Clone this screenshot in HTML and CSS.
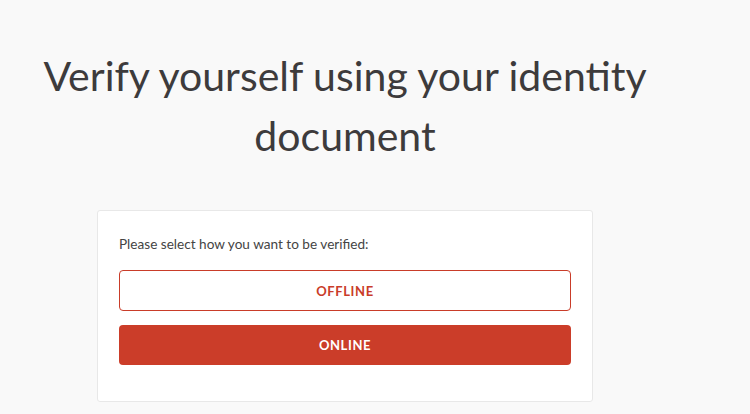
FILE: index.html
```html
<!DOCTYPE html>
<html lang="en">
<head>
<meta charset="utf-8">
<title>Verify yourself</title>
<link rel="stylesheet" href="styles.css">
</head>
<body>
<main class="page">
  <h1 class="title">Verify yourself using your identity document</h1>
  <section class="card">
    <p class="prompt">Please select how you want to be verified:</p>
    <button class="btn btn-outline" type="button">OFFLINE</button>
    <button class="btn btn-solid" type="button">ONLINE</button>
  </section>
</main>
</body>
</html>
```

FILE: styles.css
```css
html, body {
  margin: 0;
  padding: 0;
  background: #f9f9f9;
}
body {
  font-family: "Lato", "Liberation Sans", sans-serif;
  color: #3c3c3c;
}
.page {
  width: 690px;
  display: flex;
  flex-direction: column;
  align-items: center;
  padding-top: 46px;
}
.title {
  margin: 0;
  width: 660px;
  font-size: 41px;
  line-height: 60px;
  font-weight: 400;
  text-align: center;
  color: #3d3b3c;
}
.card {
  margin-top: 44px;
  width: 452px;
  padding: 22px 21px 36px 21px;
  background: #fff;
  border: 1px solid #e8e8e8;
  border-radius: 3px;
  display: flex;
  flex-direction: column;
}
.prompt {
  margin: 0 0 15px 0;
  font-size: 13.6px;
  line-height: 22px;
  color: #444;
}
.btn {
  font-family: "Lato", "Liberation Sans", sans-serif;
  font-size: 13px;
  font-weight: 700;
  letter-spacing: 0.6px;
  border-radius: 4px;
  cursor: pointer;
  width: 100%;
}
.btn-outline {
  height: 41px;
  background: #fff;
  color: #c93c29;
  border: 1px solid #c93c29;
}
.btn-solid {
  margin-top: 14px;
  height: 40px;
  background: #cb3d29;
  color: #fff;
  border: none;
}
```
